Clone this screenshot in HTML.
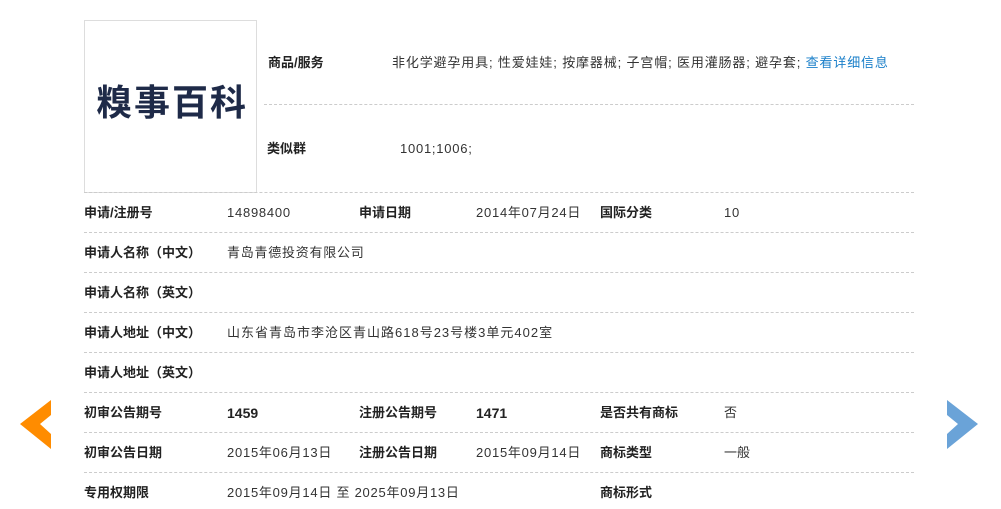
<!DOCTYPE html><html><head><meta charset="utf-8"><style>
body{margin:0;width:1001px;height:509px;background:#fff;position:relative;overflow:hidden;font-family:"Liberation Sans","Noto Sans CJK SC",sans-serif;font-size:13px;color:#333}
.t{position:absolute;white-space:nowrap;line-height:16px}
.v{letter-spacing:0.75px}
.b{font-weight:bold;color:#222}
.l{position:absolute;border-top:1px dashed #ccc;height:0}
</style></head><body>
<div style="position:absolute;left:84px;top:20px;width:171px;height:171px;border:1px solid #ddd"></div>
<div class="t" style="left:96px;top:83px;font-size:36px;line-height:40px;font-weight:bold;color:#1e2a48;letter-spacing:2px">糗事百科</div>
<div class="t b" style="left:268px;top:55px">商品/服务</div>
<div class="t" style="left:392px;top:55px;letter-spacing:0.85px">非化学避孕用具; 性爱娃娃; 按摩器械; 子宫帽; 医用灌肠器; 避孕套; <span style="color:#1a7fc9">查看详细信息</span></div>
<div class="l" style="left:264px;width:650px;top:104px"></div>
<div class="t b" style="left:267px;top:141px">类似群</div>
<div class="t v" style="left:400px;top:141px">1001;1006;</div>
<div class="l" style="left:84px;width:830px;top:192px"></div>
<div class="l" style="left:84px;width:830px;top:232px"></div>
<div class="l" style="left:84px;width:830px;top:272px"></div>
<div class="l" style="left:84px;width:830px;top:312px"></div>
<div class="l" style="left:84px;width:830px;top:352px"></div>
<div class="l" style="left:84px;width:830px;top:392px"></div>
<div class="l" style="left:84px;width:830px;top:432px"></div>
<div class="l" style="left:84px;width:830px;top:472px"></div>

<div class="t b" style="left:84px;top:205px">申请/注册号</div><div class="t v" style="left:227px;top:205px">14898400</div>
<div class="t b" style="left:359px;top:205px">申请日期</div><div class="t v" style="left:476px;top:205px">2014年07月24日</div>
<div class="t b" style="left:600px;top:205px">国际分类</div><div class="t v" style="left:724px;top:205px">10</div>

<div class="t b" style="left:84px;top:245px">申请人名称（中文）</div><div class="t v" style="left:227px;top:245px">青岛青德投资有限公司</div>
<div class="t b" style="left:84px;top:285px">申请人名称（英文）</div>
<div class="t b" style="left:84px;top:325px">申请人地址（中文）</div><div class="t" style="left:227px;top:325px;letter-spacing:1px">山东省青岛市李沧区青山路618号23号楼3单元402室</div>
<div class="t b" style="left:84px;top:365px">申请人地址（英文）</div>

<div class="t b" style="left:84px;top:405px">初审公告期号</div><div class="t b" style="left:227px;top:405px;font-size:14px">1459</div>
<div class="t b" style="left:359px;top:405px">注册公告期号</div><div class="t b" style="left:476px;top:405px;font-size:14px">1471</div>
<div class="t b" style="left:600px;top:405px">是否共有商标</div><div class="t" style="left:724px;top:405px">否</div>

<div class="t b" style="left:84px;top:445px">初审公告日期</div><div class="t v" style="left:227px;top:445px">2015年06月13日</div>
<div class="t b" style="left:359px;top:445px">注册公告日期</div><div class="t v" style="left:476px;top:445px">2015年09月14日</div>
<div class="t b" style="left:600px;top:445px">商标类型</div><div class="t" style="left:724px;top:445px">一般</div>

<div class="t b" style="left:84px;top:485px">专用权期限</div><div class="t v" style="left:227px;top:485px">2015年09月14日 至 2025年09月13日</div>
<div class="t b" style="left:600px;top:485px">商标形式</div>

<svg style="position:absolute;left:0;top:0" width="1001" height="509">
<polygon points="51,400 20,424 51,449 51,434 40,424 51,415" fill="#ff8c00"/>
<polygon points="947,400 978,424 947,449 947,434 958,424 947,415" fill="#6aa3d8"/>
</svg>
</body></html>
